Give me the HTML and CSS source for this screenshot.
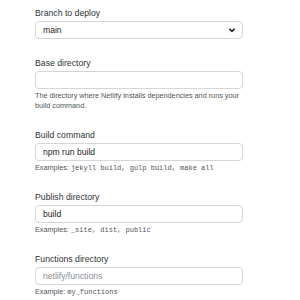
FILE: index.html
```html
<!DOCTYPE html>
<html>
<head>
<meta charset="utf-8">
<link rel="stylesheet" href="styles.css">
</head>
<body>
<div class="form">
  <div class="field field-branch">
    <label class="label">Branch to deploy</label>
    <div class="select">
      <span class="value">main</span>
      <svg class="chevron" width="6" height="5" viewBox="0 0 6 5"><path d="M0.8 1.2 L3 3.4 L5.2 1.2" fill="none" stroke="#222" stroke-width="1.6" stroke-linecap="round" stroke-linejoin="round"/></svg>
    </div>
  </div>
  <div class="field">
    <label class="label">Base directory</label>
    <div class="input"></div>
    <p class="help">The directory where Netlify installs dependencies and runs your build command.</p>
  </div>
  <div class="field">
    <label class="label">Build command</label>
    <div class="input"><span class="value">npm run build</span></div>
    <p class="help">Examples: <code>jekyll build, gulp build, make all</code></p>
  </div>
  <div class="field">
    <label class="label">Publish directory</label>
    <div class="input"><span class="value">build</span></div>
    <p class="help">Examples: <code>_site, dist, public</code></p>
  </div>
  <div class="field">
    <label class="label">Functions directory</label>
    <div class="input"><span class="placeholder">netlify/functions</span></div>
    <p class="help">Example: <code>my_functions</code></p>
  </div>
</div>
</body>
</html>
```

FILE: styles.css
```css
html, body {
  margin: 0;
  padding: 0;
  background: #ffffff;
}
body {
  font-family: "Liberation Sans", Arial, sans-serif;
  color: #2b2f33;
}
.form {
  display: flex;
  flex-direction: column;
  gap: 18px;
  width: 208px;
  padding: 7px 0 0 35px;
}
.field {
  display: flex;
  flex-direction: column;
}
.label {
  display: block;
  font-size: 8.7px;
  line-height: 12px;
  margin-bottom: 2px;
  color: #2e3236;
}
.select, .input {
  box-sizing: border-box;
  height: 18px;
  border: 1px solid #d4d6d9;
  border-radius: 4px;
  display: flex;
  align-items: center;
  padding: 0 7px;
  background: #fff;
}
.select {
  justify-content: space-between;
  padding-right: 7px;
}
.value {
  font-size: 8.6px;
  color: #1c1f22;
  font-weight: 500;
}
.placeholder {
  font-size: 8.6px;
  color: #8a8f94;
}
.chevron {
  display: block;
}
.help {
  margin: 2px 0 0 0;
  font-size: 7.25px;
  line-height: 10px;
  color: #4f5459;
}
.help code {
  font-family: "Liberation Mono", "DejaVu Sans Mono", monospace;
  font-size: 7px;
  color: #4f5459;
}
```
